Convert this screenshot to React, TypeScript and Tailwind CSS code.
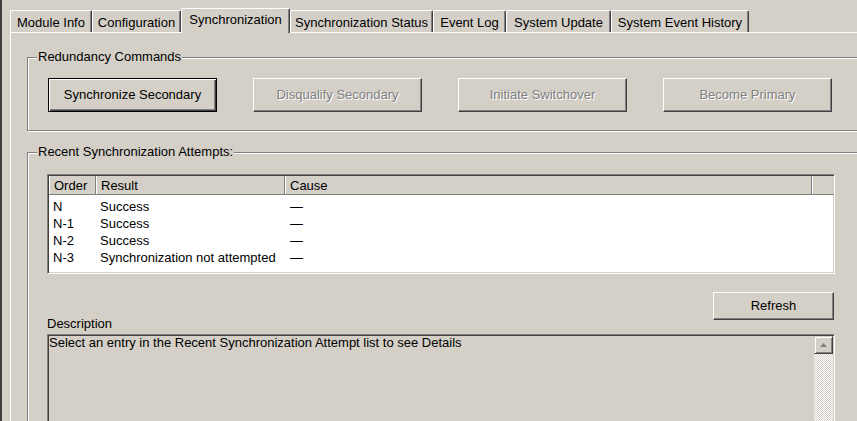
import React from 'react';

const tabs = [
  { label: 'Module Info', w: 'w-[82px]' },
  { label: 'Configuration', w: 'w-[89px]' },
  { label: 'Synchronization', w: 'w-[109px]', active: true },
  { label: 'Synchronization Status', w: 'w-[143px]' },
  { label: 'Event Log', w: 'w-[73px]' },
  { label: 'System Update', w: 'w-[105px]' },
  { label: 'System Event History', w: 'w-[138px]' },
];

const attempts = [
  { order: 'N', result: 'Success', cause: '—' },
  { order: 'N-1', result: 'Success', cause: '—' },
  { order: 'N-2', result: 'Success', cause: '—' },
  { order: 'N-3', result: 'Synchronization not attempted', cause: '—' },
];

function Tab({ label, w, active }: { label: string; w: string; active?: boolean }) {
  if (active) {
    return (
      <div
        className={`${w} relative z-10 mb-[-1px] flex h-[25px] items-start justify-center rounded-t-[2px] border-l border-t border-r border-l-white border-t-white border-r-[#404040] bg-[#d4d0c8] pt-[3px] leading-[15px] shadow-[inset_-1px_0_0_#808080]`}
      >
        {label}
      </div>
    );
  }
  return (
    <div
      className={`${w} flex h-[22px] items-start justify-center rounded-t-[2px] border-l border-t border-r border-l-white border-t-white border-r-[#404040] pt-[4px] leading-[15px] shadow-[inset_-1px_0_0_#808080]`}
    >
      {label}
    </div>
  );
}

function GroupBox({ title, className, children }: { title: string; className: string; children: React.ReactNode }) {
  return (
    <div className={`relative border border-[#808080] shadow-[inset_1px_1px_0_#fff,1px_1px_0_#fff] ${className}`}>
      <div className="absolute left-[9px] top-[-9px] bg-[#d4d0c8] px-[1px] leading-[15px]">{title}</div>
      {children}
    </div>
  );
}

function Button({ label, variant }: { label: string; variant: 'default' | 'normal' | 'disabled' }) {
  if (variant === 'default') {
    return (
      <button className="flex h-[34px] w-[169px] items-center justify-center border border-black bg-[#d4d0c8] text-black shadow-[inset_1px_1px_0_#fff,inset_-1px_-1px_0_#404040,inset_-2px_-2px_0_#808080]">
        {label}
      </button>
    );
  }
  if (variant === 'disabled') {
    return (
      <button className="flex h-[34px] w-[169px] items-center justify-center border border-b-[#404040] border-l-white border-r-[#404040] border-t-white bg-[#d4d0c8] text-[#808080] shadow-[inset_-1px_-1px_0_#808080] [text-shadow:1px_1px_0_#fff]">
        {label}
      </button>
    );
  }
  return (
    <button className="flex h-[28px] w-[121px] items-center justify-center border border-b-[#404040] border-l-white border-r-[#404040] border-t-white bg-[#d4d0c8] text-black shadow-[inset_-1px_-1px_0_#808080]">
      {label}
    </button>
  );
}

function HeaderCell({ label, w }: { label: string; w: string }) {
  return (
    <div className={`${w} h-full shrink-0 border-l border-r border-l-white border-r-[#808080] pl-[4px] pt-[2px] leading-[15px]`}>
      {label}
    </div>
  );
}

export default function App() {
  return (
    <div className="h-[421px] w-[857px] overflow-hidden border-l-2 border-l-[#404040] bg-[#d4d0c8] font-['Liberation_Sans',Arial,sans-serif] text-[13px] text-black">
      {/* Tab strip */}
      <div className="flex h-[32px] items-end pl-[8px]">
        {tabs.map((t) => (
          <Tab key={t.label} {...t} />
        ))}
      </div>

      {/* Tab page */}
      <div className="ml-[8px] h-[389px] w-[900px] border-l border-t border-white pl-[16px] pt-[24px]">
        <GroupBox title="Redundancy Commands" className="h-[74px] w-[880px] pl-[20px] pt-[20px]">
          <div className="flex gap-[36px]">
            <Button label="Synchronize Secondary" variant="default" />
            <Button label="Disqualify Secondary" variant="disabled" />
            <Button label="Initiate Switchover" variant="disabled" />
            <Button label="Become Primary" variant="disabled" />
          </div>
        </GroupBox>

        <GroupBox title="Recent Synchronization Attempts:" className="mt-[21px] h-[300px] w-[880px] pl-[19px] pt-[21px]">
          <div className="w-[788px]">
            {/* List view */}
            <div className="flex h-[100px] flex-col border-b border-l border-r border-t border-b-white border-l-[#808080] border-r-white border-t-[#808080] bg-white shadow-[inset_1px_1px_0_#404040,inset_-1px_-1px_0_#d4d0c8]">
              <div className="ml-[1px] mt-[1px] flex h-[19px] border-b border-b-[#808080] bg-[#d4d0c8]">
                <HeaderCell label="Order" w="w-[47px]" />
                <HeaderCell label="Result" w="w-[189px]" />
                <HeaderCell label="Cause" w="w-[527px]" />
                <div className="h-full flex-1 border-l border-l-white" />
              </div>
              <div className="pt-[3px]">
                {attempts.map((a) => (
                  <div key={a.order} className="flex h-[17px] items-center leading-[15px]">
                    <div className="w-[48px] shrink-0 pl-[5px]">{a.order}</div>
                    <div className="w-[189px] shrink-0 pl-[4px]">{a.result}</div>
                    <div className="pl-[5px]">{a.cause}</div>
                  </div>
                ))}
              </div>
            </div>

            <div className="mt-[18px] flex justify-end pr-[1px]">
              <Button label="Refresh" variant="normal" />
            </div>

            <div className="mt-[-3px] leading-[14px]">Description</div>

            {/* Description box */}
            <div className="mt-[3px] flex h-[120px] border-b border-l border-r border-t border-b-white border-l-[#808080] border-r-white border-t-[#808080] shadow-[inset_1px_1px_0_#404040]">
              <div className="flex-1 pl-[1px] pt-[1px] leading-[14px]">
                Select an entry in the Recent Synchronization Attempt list to see Details
              </div>
              <div className="mr-[1px] mt-[1px] flex w-[19px] flex-col bg-[repeating-conic-gradient(#ffffff_0_25%,#d4d0c8_0_50%)] bg-[length:2px_2px]">
                <div className="flex h-[18px] items-center justify-center border border-b-[#404040] border-l-[#d4d0c8] border-r-[#404040] border-t-[#d4d0c8] bg-[#d4d0c8] shadow-[inset_1px_1px_0_#fff,inset_-1px_-1px_0_#808080]">
                  <svg width="7" height="4" viewBox="0 0 7 4">
                    <path d="M3.5 0 L7 4 L0 4 Z" fill="#808080" />
                  </svg>
                </div>
              </div>
            </div>
          </div>
        </GroupBox>
      </div>
    </div>
  );
}
